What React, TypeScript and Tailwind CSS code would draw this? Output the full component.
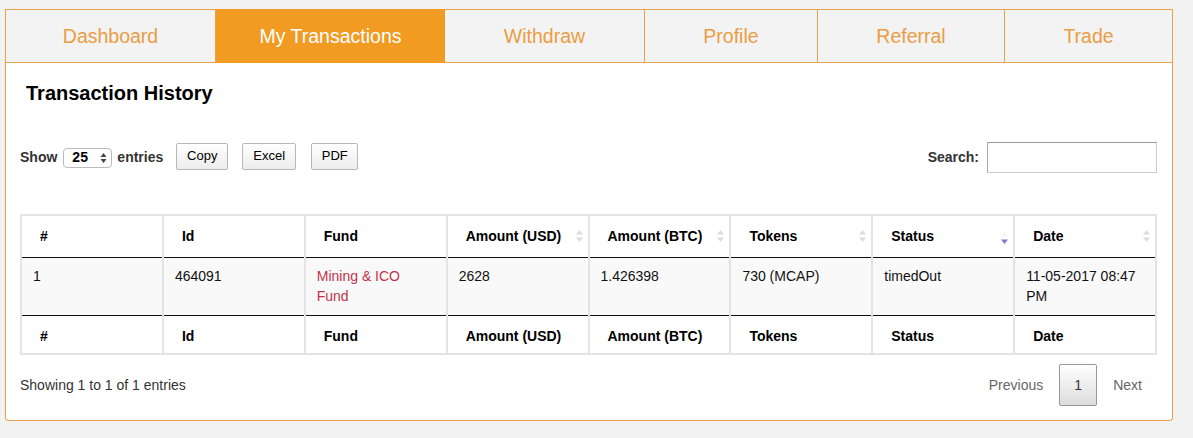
import React from 'react';

const tabs = [
  { label: 'Dashboard', w: 'w-[211px]' },
  { label: 'My Transactions', w: 'w-[229px]', active: true },
  { label: 'Withdraw', w: 'w-[200px]' },
  { label: 'Profile', w: 'w-[173px]' },
  { label: 'Referral', w: 'w-[187px]' },
  { label: 'Trade', w: 'w-[168px]' },
];

const columns = [
  { label: '#', sort: false },
  { label: 'Id', sort: false },
  { label: 'Fund', sort: false },
  { label: 'Amount (USD)', sort: true },
  { label: 'Amount (BTC)', sort: true },
  { label: 'Tokens', sort: true },
  { label: 'Status', sort: true, desc: true },
  { label: 'Date', sort: true },
];

const SortIcon = ({ desc }: { desc?: boolean }) => (
  <svg width="9" height="14" viewBox="0 0 9 14" className={desc ? 'mt-1' : ''}>
    <path d="M4.5 1 L8 5.5 H1 Z" fill={desc ? '#f4f4fb' : '#dcdcdc'} />
    <path d="M1 8.5 H8 L4.5 13 Z" fill={desc ? '#7a7ad4' : '#dcdcdc'} />
  </svg>
);

export default function App() {
  return (
    <div
      className="min-h-[438px] bg-[#f2f2f2] pt-[9px] pl-[5px]"
      style={{ fontFamily: '"Liberation Sans", Arial, sans-serif' }}
    >
      <div className="flex w-[1168px] h-[54px]">
        {tabs.map((t, i) => (
          <div
            key={t.label}
            className={`${t.w} flex items-center justify-center pt-[2px] text-[19.5px] border-b border-[#eaa24a] ${
              t.active
                ? 'bg-[#f29b23] text-white border-[#f29b23]'
                : `bg-[#f3f3f3] text-[#eb9c45] border-t ${i === 0 ? 'border-l' : ''} border-r`
            }`}
          >
            {t.label}
          </div>
        ))}
      </div>

      <div className="w-[1168px] h-[358px] bg-white border-x border-b border-[#eaa24a] rounded-b-[4px] pl-[14px] pr-[15px]">
        <h2 className="text-[20px] font-bold text-black pl-[6px] pt-[18px] leading-[24px]">
          Transaction History
        </h2>

        <div className="flex items-center justify-between mt-[37px] h-[31px]">
          <div className="flex items-center text-[14px] text-[#333]">
            <span className="font-bold">Show</span>
            <div className="ml-[6px] w-[49px] h-[20px] border border-[#bbb] rounded-[4px] flex items-center justify-between pl-[8px] pr-[4px] bg-white">
              <span className="font-bold text-[14px] text-black">25</span>
              <svg width="7" height="12" viewBox="0 0 7 12">
                <path d="M3.5 1 L6.5 5 H0.5 Z" fill="#444" />
                <path d="M0.5 7 H6.5 L3.5 11 Z" fill="#444" />
              </svg>
            </div>
            <span className="font-bold ml-[5px]">entries</span>
            {['Copy', 'Excel', 'PDF'].map((b, i) => (
              <button
                key={b}
                className={`${i === 0 ? 'ml-[13px] w-[52px]' : i === 1 ? 'ml-[14px] w-[54px]' : 'ml-[15px] w-[47px]'} h-[27px] -mt-[3px] text-[13px] text-black border border-[#b8b8b8] rounded-[2px] bg-gradient-to-b from-white to-[#ececec]`}
              >
                {b}
              </button>
            ))}
          </div>
          <div className="flex items-center">
            <span className="font-bold text-[14px] text-[#333] mr-[8px]">Search:</span>
            <div className="w-[170px] h-[31px] border border-[#ccc] border-t-[#999] border-l-[#aaa] bg-white" />
          </div>
        </div>

        <table className="mt-[41px] w-[1137px] table-fixed border-collapse text-[14px]">
          <thead>
            <tr className="h-[42px]">
              {columns.map((c) => (
                <th
                  key={c.label}
                  className="border-x-2 border-t-2 border-[#e3e3e3] border-b border-b-[#111] text-left font-bold text-black pl-[18px] pr-[4px]"
                >
                  <div className="flex items-center justify-between">
                    <span>{c.label}</span>
                    {c.sort && <SortIcon desc={c.desc} />}
                  </div>
                </th>
              ))}
            </tr>
          </thead>
          <tbody>
            <tr className="bg-[#f9f9f9] align-top text-[#111] leading-[20px]">
              {['1', '464091', 'Mining & ICO Fund', '2628', '1.426398', '730 (MCAP)', 'timedOut', '11-05-2017 08:47 PM'].map(
                (v, i) => (
                  <td
                    key={i}
                    className={`border-x-2 border-y-0 border-[#e3e3e3] pl-[11px] pr-[10px] pt-[8px] pb-[9px] h-[57px] ${
                      i === 2 ? 'text-[#c0334d]' : ''
                    }`}
                  >
                    {v}
                  </td>
                )
              )}
            </tr>
          </tbody>
          <tfoot>
            <tr className="h-[39px]">
              {columns.map((c) => (
                <th
                  key={c.label}
                  className="border-x-2 border-b-2 border-[#e3e3e3] border-t border-t-[#111] text-left font-bold text-black pl-[18px] pt-[4px]"
                >
                  {c.label}
                </th>
              ))}
            </tr>
          </tfoot>
        </table>

        <div className="flex items-center justify-between mt-[9px]">
          <span className="text-[14px] text-[#333]">Showing 1 to 1 of 1 entries</span>
          <div className="flex items-center text-[14px] text-[#666] mr-[15px]">
            <span className="mr-[16px]">Previous</span>
            <div className="w-[38px] h-[42px] flex items-center justify-center border border-[#979797] rounded-[2px] bg-gradient-to-b from-white to-[#dcdcdc] text-[#333]">
              1
            </div>
            <span className="ml-[16px]">Next</span>
          </div>
        </div>
      </div>
    </div>
  );
}
